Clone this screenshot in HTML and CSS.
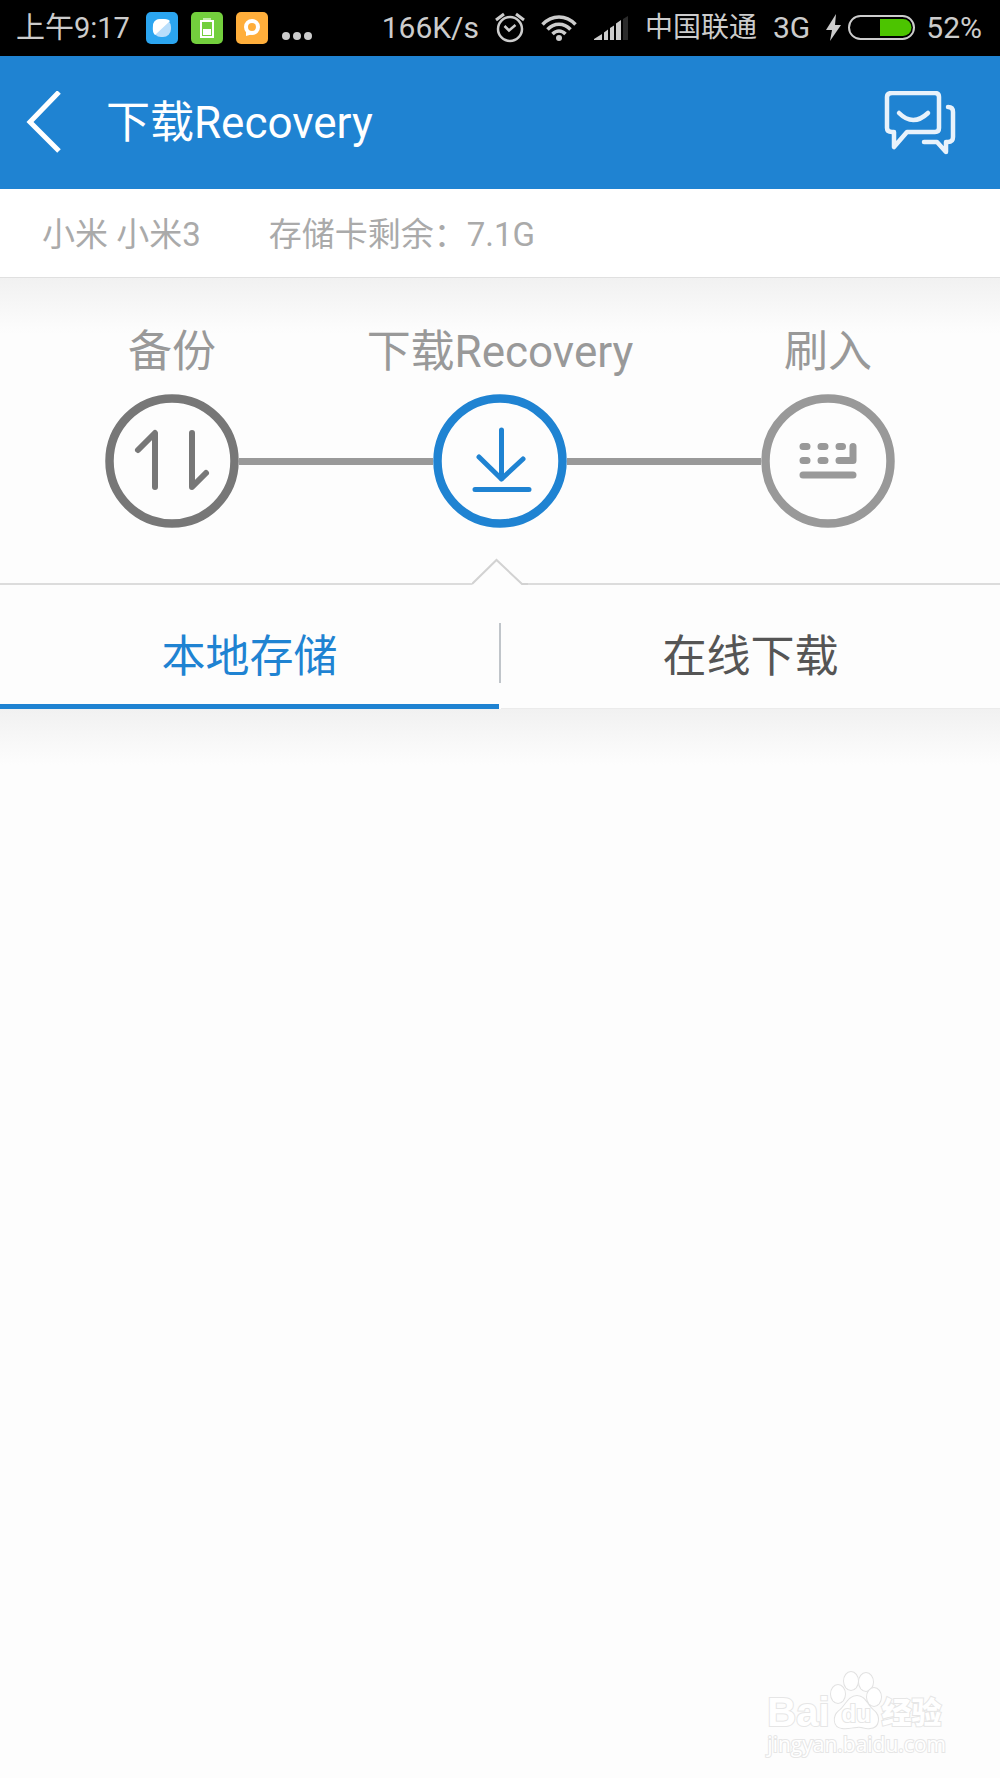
FILE: index.html
```html
<!DOCTYPE html>
<html lang="zh-CN">
<head>
    <meta charset="UTF-8">
    <meta name="viewport" content="width=device-width, initial-scale=1.0">
    <title>下载Recovery</title>
    <link rel="stylesheet" href="styles.css">
</head>
<body>

    <!-- Status Bar -->
    <div class="status-bar">
        <div class="status-left">
            <span class="time">上午9:17</span>
            <svg width="32" height="32" viewBox="0 0 32 32">
                <rect width="32" height="32" rx="5" fill="#2ba5f0"/>
                <rect x="7" y="7" width="18" height="18" rx="8" fill="#b9defb"/>
                <path d="M9 23C6 20 7 15 7 13C8 8 11 7 15 7C19 7 22 7 24 9Z" fill="#fff"/>
            </svg>
            <svg width="32" height="32" viewBox="0 0 32 32">
                <rect width="32" height="32" rx="5" fill="#73cf3d"/>
                <path d="M12 7H20" stroke="#c4ecae" stroke-width="2"/>
                <rect x="10" y="9" width="12" height="16" fill="none" stroke="#fff" stroke-width="2"/>
                <rect x="12" y="17" width="8" height="6" fill="#fff"/>
            </svg>
            <svg width="32" height="32" viewBox="0 0 32 32">
                <rect width="32" height="32" rx="5" fill="#ffae3b"/>
                <circle cx="16" cy="15" r="6" fill="none" stroke="#fff" stroke-width="4"/>
                <path d="M10 17L10 24L17 22Z" fill="#fff"/>
            </svg>
            <svg width="32" height="32" viewBox="0 0 32 32" fill="#ccc">
                <circle cx="5" cy="24" r="4"/>
                <circle cx="16" cy="24" r="4"/>
                <circle cx="27" cy="24" r="4"/>
            </svg>
        </div>
        <div class="status-right">
            <span>166K/s</span>
            <svg width="30" height="32" viewBox="0 0 30 32" fill="none" stroke="#ccc" stroke-width="2.500">
                <circle cx="15" cy="17" r="12"/>
                <path d="M9.500 14L14 18.500L20.500 13"/>
                <path d="M1 8L9 2M21 2L29 8" stroke-width="3"/>
            </svg>
            <svg width="36" height="32" viewBox="0 0 36 32" fill="none" stroke="#ccc" stroke-width="3.500">
                <path d="M1.500 12.500C11 2.500 25 2.500 34.500 12.500M6.500 17.500C13 10.500 23 10.500 29.500 17.500M11.500 22C15.500 18 20.500 18 24.500 22"/>
                <circle cx="18" cy="26" r="3" fill="#ccc" stroke="none"/>
            </svg>
            <svg width="36" height="32" viewBox="0 0 36 32" fill="#ccc">
                <path d="M1 28V27L9 22V28ZM11 28V20.500L15 17.500V28ZM17 28V16L21 13.500V28ZM23 28V11.500L28 8V28Z"/>
                <path d="M30 28V7L35 4V28Z" fill="#2b2b2b"/>
            </svg>
            <span class="carrier">中国联通</span>
            <span>3G</span>
            <span class="battery">
                <svg width="90" height="32" viewBox="0 0 90 32">
                    <path d="M10 2L0 18H6L4 29L15 13H9Z" fill="#ccc"/>
                    <rect x="23" y="4" width="65" height="23" rx="11.500" fill="none" stroke="#ccc" stroke-width="2"/>
                    <path d="M54 7H77A8.500 8.500 0 0 1 77 24H54Z" fill="#4cc400"/>
                </svg>
                52%
            </span>
        </div>
    </div>

    <!-- Header -->
    <header class="header">
        <button type="button" aria-label="返回">
            <svg width="36" height="64" viewBox="0 0 36 64" fill="none" stroke="#fff" stroke-width="5">
                <path d="M33 1L4 31L33 60"/>
            </svg>
        </button>
        <h1>下载Recovery</h1>
        <button type="button" aria-label="消息">
            <svg width="72" height="64" viewBox="0 0 72 64" fill="none" stroke="#e8f2fb" stroke-width="4.500" stroke-linecap="round" stroke-linejoin="round">
                <path d="M8 2H51Q55 2 55 6V37Q55 41 51 41H23L10 56V41H8Q3 41 3 37V6Q3 2 8 2Z"/>
                <path d="M15 22Q29 36 44 22"/>
                <path d="M64 16Q69 16 69 21V46Q69 51 64 51H62V61L53 51H40"/>
            </svg>
        </button>
    </header>

    <!-- Device Info -->
    <div class="device-info">
        <span>小米 小米3</span>
        <span>存储卡剩余：7.1G</span>
    </div>

    <!-- Steps -->
    <ol class="steps">
        <li class="step done">
            <span class="step-label">备份</span>
            <div class="step-row">
                <svg class="step-icon" width="134" height="134" viewBox="0 0 134 134" fill="none" stroke="currentColor" stroke-linecap="round" stroke-linejoin="round">
                    <circle cx="67" cy="67" r="62.500" stroke-width="8.500"/>
                    <path d="M33 56L50 39V93M87 39V93L101 79" stroke-width="6"/>
                </svg>
            </div>
        </li>
        <li class="step active">
            <span class="step-label">下载Recovery</span>
            <div class="step-row">
                <svg class="step-icon" width="134" height="134" viewBox="0 0 134 134" fill="none" stroke="currentColor" stroke-linecap="round" stroke-linejoin="round">
                    <circle cx="67" cy="67" r="62.500" stroke-width="8.500"/>
                    <path d="M68.500 36V85M46 63L68.500 85L90 65M42 95.500H96" stroke-width="5"/>
                </svg>
            </div>
        </li>
        <li class="step">
            <span class="step-label">刷入</span>
            <div class="step-row">
                <svg class="step-icon" width="134" height="134" viewBox="0 0 134 134" fill="none" stroke="currentColor" stroke-linecap="round" stroke-linejoin="round">
                    <circle cx="67" cy="67" r="62.500" stroke-width="8.500"/>
                    <path d="M42 52.500H46M60 52.500H64M78 52.500H81.500M42 66.500H46M60 66.500H64M78 66.500H92V52.500M42 81H92" stroke-width="7"/>
                </svg>
            </div>
        </li>
    </ol>

    <!-- Pointer under the current step -->
    <div class="pointer">
        <svg width="56" height="28" viewBox="0 0 56 28" fill="none" stroke="#d2d2d2" stroke-width="2">
            <path d="M0 27L24.500 3L50 27H56"/>
        </svg>
    </div>

    <!-- Tabs -->
    <nav class="tabs" role="tablist">
        <button type="button" class="tab selected" role="tab" aria-selected="true">本地存储</button>
        <span class="divider"></span>
        <button type="button" class="tab" role="tab" aria-selected="false">在线下载</button>
    </nav>

    <!-- File List -->
    <main class="file-list"></main>

    <!-- Watermark -->
    <footer class="watermark">
        <div class="brand">
            <span class="latin">Bai</span>
            <span class="paw">
                <svg width="52" height="60" viewBox="0 0 52 60" fill="#fff" stroke="#e2e2e2" stroke-width="2">
                    <ellipse cx="8" cy="24" rx="7" ry="9"/>
                    <ellipse cx="21" cy="11" rx="7" ry="9"/>
                    <ellipse cx="36" cy="12" rx="7" ry="9"/>
                    <ellipse cx="44" cy="27" rx="7" ry="9"/>
                    <path d="M27 26C35 26 37 35 43 40C51 46 49 58 40 58C35 59 32 56 27 57C22 57 18 59 12 58C3 57 3 46 9 41C16 36 18 26 27 26Z"/>
                </svg>
                <span class="du">du</span>
            </span>
            <span class="cjk">经验</span>
        </div>
        <div class="site">jingyan.baidu.com</div>
    </footer>

</body>
</html>
```

FILE: styles.css
```css
/* General Reset */
body, h1, ol, button {
    margin: 0;
    padding: 0;
    font-family: Roboto, "Noto Sans CJK SC", sans-serif;
    font-weight: 400;
}
body {
    background-color: #fdfdfd;
    display: flex;
    flex-direction: column;
    min-height: 100vh;
}
button {
    background: none;
    border: none;
    cursor: pointer;
}
svg {
    display: block;
    flex: none;
}

/* Status Bar */
.status-bar {
    display: flex;
    justify-content: space-between;
    align-items: center;
    height: 56px;
    padding: 0 18px 0 16px;
    background-color: #000;
    color: #ccc;
    font-size: 30px;
    line-height: 36px;
    white-space: nowrap;
}
.status-left {
    display: flex;
    align-items: center;
    gap: 13px;
}
.time {
    margin-right: 3px;
    font-size: 29px;
}
.status-right {
    display: flex;
    align-items: center;
    gap: 16px;
}
.carrier {
    font-size: 28px;
}
.battery {
    display: flex;
    align-items: center;
    gap: 10px;
}

/* Header */
.header {
    display: flex;
    align-items: center;
    gap: 44px;
    height: 133px;
    padding: 0 44px 0 26px;
    background-color: #1f83d2;
    color: #fff;
}
.header h1 {
    flex: 1;
    font-size: 44px;
    line-height: 52px;
}

/* Device Info */
.device-info {
    display: flex;
    align-items: center;
    gap: 68px;
    height: 84px;
    padding: 4px 42px 0;
    background-color: #fff;
    border-bottom: 1px solid #e0e0e0;
    color: #aaa;
    font-size: 33px;
    line-height: 40px;
}

/* Steps */
.steps {
    display: flex;
    padding: 48px 8px 29px;
    list-style: none;
    background: linear-gradient(#f1f1f1, #fdfdfd 56px);
}
.step {
    flex: 1;
    color: #999;
}
.step-label {
    display: block;
    margin-bottom: 16px;
    font-size: 44px;
    line-height: 52px;
    text-align: center;
}
.step-row {
    display: flex;
    align-items: center;
}
.step-row::before, .step-row::after {
    content: "";
    flex: 1;
    height: 7px;
    background-color: #999;
}
.step:first-child .step-row::before, .step:last-child .step-row::after {
    visibility: hidden;
}
.done .step-icon {
    color: #777;
}
.active .step-icon {
    color: #1f83d2;
}

/* Pointer */
.pointer {
    display: flex;
    align-items: flex-end;
}
.pointer::before, .pointer::after {
    content: "";
    flex: 1;
    height: 2px;
    background-color: #dcdcdc;
}

/* Tabs */
.tabs {
    display: flex;
    align-items: center;
    height: 112px;
    padding-top: 12px;
}
.tab {
    flex: 1;
    align-self: stretch;
    padding-top: 8px;
    box-shadow: inset 0 -1px #ebebeb;
    color: #555;
    font-size: 44px;
    line-height: 52px;
}
.tab.selected {
    box-shadow: inset 0 -5px #1f83d2;
    color: #1f83d2;
}
.divider {
    width: 2px;
    height: 60px;
    background-color: #c0c5ca;
}

/* File List */
.file-list {
    flex: 1;
    background: linear-gradient(#f1f1f1, #fdfdfd 56px);
}

/* Watermark */
.watermark {
    align-self: flex-end;
    padding: 0 54px 20px 0;
    color: #fff;
    -webkit-text-stroke: 2px #e6e6e6;
    paint-order: stroke fill;
}
.brand {
    display: flex;
    align-items: flex-end;
    height: 60px;
}
.latin {
    font: 700 40px/36px "Liberation Sans", sans-serif;
}
.paw {
    position: relative;
}
.du {
    position: absolute;
    left: 12px;
    bottom: 2px;
    font: 700 24px/28px "Liberation Sans", sans-serif;
}
.cjk {
    font: 900 30px/40px "Noto Sans CJK SC", sans-serif;
}
.site {
    font: 400 21px/28px "Open Sans", sans-serif;
}
```
